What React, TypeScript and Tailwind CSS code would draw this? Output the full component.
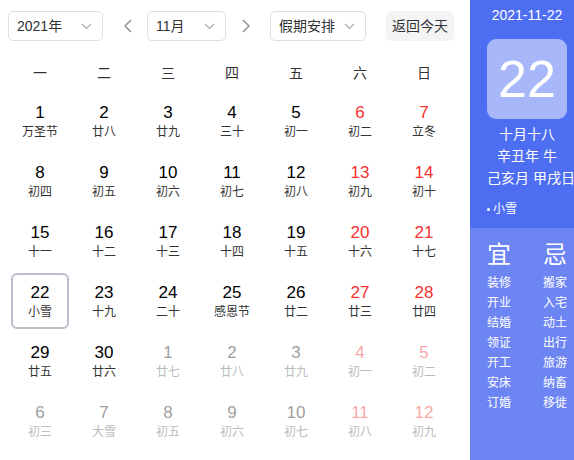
import React from "react";

type Day = { d: number; l: string; cur: boolean; wk: boolean };

const raw: [number, string, boolean][] = [
  [1, "万圣节", true], [2, "廿八", true], [3, "廿九", true], [4, "三十", true], [5, "初一", true], [6, "初二", true], [7, "立冬", true],
  [8, "初四", true], [9, "初五", true], [10, "初六", true], [11, "初七", true], [12, "初八", true], [13, "初九", true], [14, "初十", true],
  [15, "十一", true], [16, "十二", true], [17, "十三", true], [18, "十四", true], [19, "十五", true], [20, "十六", true], [21, "十七", true],
  [22, "小雪", true], [23, "十九", true], [24, "二十", true], [25, "感恩节", true], [26, "廿二", true], [27, "廿三", true], [28, "廿四", true],
  [29, "廿五", true], [30, "廿六", true], [1, "廿七", false], [2, "廿八", false], [3, "廿九", false], [4, "初一", false], [5, "初二", false],
  [6, "初三", false], [7, "大雪", false], [8, "初五", false], [9, "初六", false], [10, "初七", false], [11, "初八", false], [12, "初九", false],
];

const days: Day[] = raw.map(([d, l, cur], i) => ({ d, l, cur, wk: i % 7 >= 5 }));

const Chevron = () => (
  <svg width="11" height="7" viewBox="0 0 11 7" fill="none" className="shrink-0">
    <path d="M1 1l4.5 4.5L10 1" stroke="#a8abb2" strokeWidth="1.2" />
  </svg>
);

const Arrow = ({ dir }: { dir: "l" | "r" }) => (
  <svg width="10" height="14" viewBox="0 0 10 14" fill="none" className="shrink-0">
    <path d={dir === "l" ? "M8 1L2 7l6 6" : "M2 1l6 6-6 6"} stroke="#909399" strokeWidth="1.5" />
  </svg>
);

const Select = ({ text, w }: { text: string; w: string }) => (
  <div className={`${w} h-[30px] border border-[#dcdfe6] rounded-[5px] flex items-center justify-between pl-[8px] pr-[10px] text-[14px] text-[#303133]`}>
    <span>{text}</span>
    <Chevron />
  </div>
);

const yi = ["装修", "开业", "结婚", "领证", "开工", "安床", "订婚"];
const ji = ["搬家", "入宅", "动土", "出行", "旅游", "纳畜", "移徙"];

export default function App() {
  return (
    <div
      className="w-[574px] h-[460px] flex bg-white overflow-hidden"
      style={{ fontFamily: '"Liberation Sans", "Noto Sans CJK SC", sans-serif' }}
    >
      <div className="w-[470px] shrink-0 pl-[8px] pt-[11px]">
        <div className="flex items-center h-[30px]">
          <Select text="2021年" w="w-[95px]" />
          <div className="ml-[20px] mr-[14px] flex"><Arrow dir="l" /></div>
          <Select text="11月" w="w-[79px]" />
          <div className="ml-[15px] mr-[19px] flex"><Arrow dir="r" /></div>
          <Select text="假期安排" w="w-[96px]" />
          <div className="ml-[20px] w-[68px] h-[30px] rounded-[6px] bg-[#f4f4f5] flex items-center justify-center text-[14px] text-[#303133]">
            返回今天
          </div>
        </div>
        <div className="grid grid-cols-7 w-[448px] mt-[14px]">
          {["一", "二", "三", "四", "五", "六", "日"].map((w) => (
            <div key={w} className="h-[36px] flex items-center justify-center text-[14px] text-[#333]">
              {w}
            </div>
          ))}
          {days.map((x, i) => {
            const sel = x.cur && x.d === 22;
            const numColor = x.cur
              ? x.wk ? "text-[#f73131]" : "text-black"
              : x.wk ? "text-[#f9a8a8]" : "text-[#a0a0a0]";
            const lunColor = x.cur ? "text-[#333]" : "text-[#bbbbbb]";
            return (
              <div key={i} className="h-[60px] p-[2px] px-[3px]">
                <div
                  className={`h-full flex flex-col items-center justify-center rounded-[6px] border-2 ${sel ? "border-[#bcbfc9]" : "border-transparent"}`}
                >
                  <div className={`text-[17px] leading-[20px] mt-[1px] ${numColor}`}>{x.d}</div>
                  <div className={`text-[12px] leading-[18px] ${lunColor}`}>{x.l}</div>
                </div>
              </div>
            );
          })}
        </div>
      </div>
      <div className="w-[104px] shrink-0 flex flex-col text-white">
        <div className="h-[228px] bg-[#4e6ef2] pl-[17px] pr-[7px] flex flex-col">
          <div className="text-[14px] leading-[20px] mt-[5px] text-center">2021-11-22</div>
          <div className="mt-[14px] w-[80px] h-[80px] rounded-[9px] bg-[#a7b7f9] flex items-center justify-center text-[52px] leading-none">
            22
          </div>
          <div className="mt-[4px] text-[14px] leading-[22px] text-center whitespace-nowrap">
            <div>十月十八</div>
            <div>辛丑年 牛</div>
            <div>己亥月 甲戌日</div>
          </div>
          <div className="mt-[12px] text-[12px] leading-[16px] flex items-center gap-[3px]">
            <span className="w-[3px] h-[3px] rounded-full bg-white inline-block" />
            <span>小雪</span>
          </div>
        </div>
        <div className="flex-1 bg-[#6d85f3] pl-[17px] pt-[12px] flex gap-[32px]">
          <div className="flex flex-col items-start w-[24px]">
            <div className="text-[24px] leading-[30px] mb-[3px]">宜</div>
            {yi.map((t) => (
              <div key={t} className="text-[12px] leading-[20px] whitespace-nowrap">{t}</div>
            ))}
          </div>
          <div className="flex flex-col items-start w-[24px]">
            <div className="text-[24px] leading-[30px] mb-[3px]">忌</div>
            {ji.map((t) => (
              <div key={t} className="text-[12px] leading-[20px] whitespace-nowrap">{t}</div>
            ))}
          </div>
        </div>
      </div>
    </div>
  );
}
